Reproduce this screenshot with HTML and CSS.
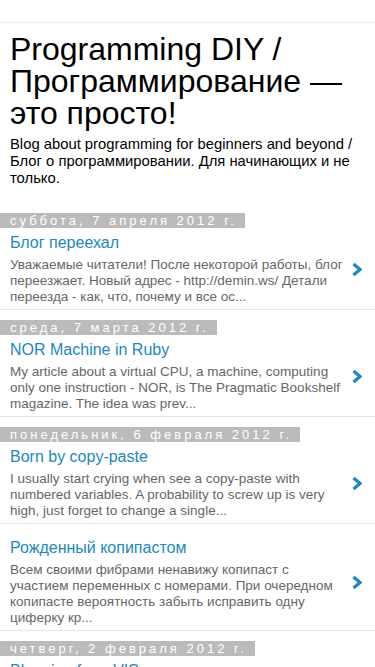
FILE: index.html
```html
<!DOCTYPE html>
<html lang="ru">
<head>
    <meta charset="UTF-8">
    <meta name="viewport" content="width=device-width, initial-scale=1.0">
    <title>Programming DIY / Программирование — это просто!</title>
    <link rel="stylesheet" href="styles.css">
</head>
<body>
    <div class="topbar"></div>

    <div class="header">
        <h1>Programming DIY / Программирование — это просто!</h1>
        <p class="description">Blog about programming for beginners and beyond / Блог о программировании. Для начинающих и не только.</p>
    </div>

    <div class="date-outer">
        <h2 class="date-header"><span>суббота, 7 апреля 2012 г.</span></h2>
        <a class="post" href="#">
            <div class="post-text">
                <h3 class="post-title">Блог переехал</h3>
                <div class="post-snippet">Уважаемые читатели! После некоторой работы, блог переезжает. Новый адрес - http://demin.ws/ Детали переезда - как, что, почему и все ос...</div>
            </div>
            <div class="post-arrow"><svg width="10" height="15" viewBox="0 0 10 15"><path d="M1.5 2 L8 7.5 L1.5 13" fill="none" stroke="#2288bb" stroke-width="3.2"/></svg></div>
        </a>
    </div>

    <div class="date-outer">
        <h2 class="date-header"><span>среда, 7 марта 2012 г.</span></h2>
        <a class="post" href="#">
            <div class="post-text">
                <h3 class="post-title">NOR Machine in Ruby</h3>
                <div class="post-snippet">My article about a virtual CPU, a machine, computing only one instruction - NOR, is The Pragmatic Bookshelf magazine. The idea was prev...</div>
            </div>
            <div class="post-arrow"><svg width="10" height="15" viewBox="0 0 10 15"><path d="M1.5 2 L8 7.5 L1.5 13" fill="none" stroke="#2288bb" stroke-width="3.2"/></svg></div>
        </a>
    </div>

    <div class="date-outer">
        <h2 class="date-header"><span>понедельник, 6 февраля 2012 г.</span></h2>
        <a class="post" href="#">
            <div class="post-text">
                <h3 class="post-title">Born by copy-paste</h3>
                <div class="post-snippet">I usually start crying when see a copy-paste with numbered variables. A probability to screw up is very high, just forget to change a single...</div>
            </div>
            <div class="post-arrow"><svg width="10" height="15" viewBox="0 0 10 15"><path d="M1.5 2 L8 7.5 L1.5 13" fill="none" stroke="#2288bb" stroke-width="3.2"/></svg></div>
        </a>
        <a class="post" href="#">
            <div class="post-text">
                <h3 class="post-title">Рожденный копипастом</h3>
                <div class="post-snippet">Всем своими фибрами ненавижу копипаст с участием переменных с номерами. При очередном копипасте вероятность забыть исправить одну циферку кр...</div>
            </div>
            <div class="post-arrow"><svg width="10" height="15" viewBox="0 0 10 15"><path d="M1.5 2 L8 7.5 L1.5 13" fill="none" stroke="#2288bb" stroke-width="3.2"/></svg></div>
        </a>
    </div>

    <div class="date-outer">
        <h2 class="date-header"><span>четверг, 2 февраля 2012 г.</span></h2>
        <a class="post" href="#">
            <div class="post-text">
                <h3 class="post-title">Blogging from VIS</h3>
            </div>
        </a>
    </div>
</body>
</html>
```

FILE: styles.css
```css
body {
    margin: 0;
    font-family: 'Liberation Sans', Arial, sans-serif;
    background: #fff;
    color: #000;
}

.topbar {
    height: 22px;
    border-bottom: 1px solid #eee;
}

.header {
    padding: 10px 10px 0;
}

h1 {
    font-size: 32px;
    font-weight: normal;
    line-height: 32px;
    margin: 0 0 7px;
}

.description {
    font-size: 14.8px;
    line-height: 17px;
    margin: 0;
    padding-bottom: 16px;
}

.date-header {
    margin: 10px 0 0;
    font-size: 13px;
    font-weight: normal;
    line-height: 15px;
}

.date-header span {
    display: inline-block;
    background: #bbb;
    color: #fff;
    letter-spacing: 3px;
    padding: 0 8px 0 10px;
}

.post {
    display: flex;
    align-items: center;
    gap: 7px;
    padding: 5px 13px 4px 10px;
    border-bottom: 1px solid #e6e6e6;
    text-decoration: none;
}

.post + .post {
    padding-top: 14px;
}

.post-text {
    flex: 1;
}

.post-title {
    margin: 0;
    font-size: 16px;
    font-weight: normal;
    line-height: 20px;
    color: #2288bb;
}

.post-snippet {
    margin-top: 4px;
    font-size: 13.5px;
    line-height: 16px;
    color: #666;
}

.post-arrow {
    width: 10px;
    display: flex;
}
```
